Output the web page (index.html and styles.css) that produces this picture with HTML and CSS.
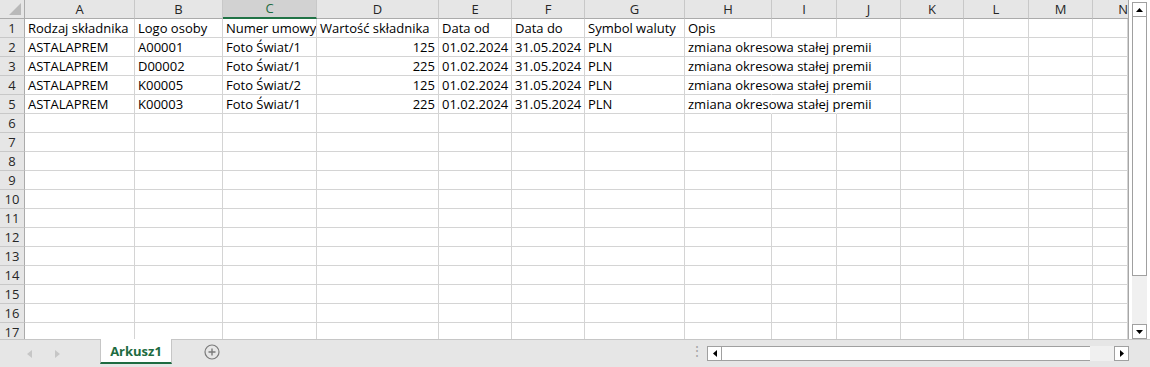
FILE: index.html
```html
<!DOCTYPE html>
<html lang="pl">
<head>
    <meta charset="UTF-8">
    <title>Arkusz1</title>
    <link rel="stylesheet" href="styles.css">
</head>
<body>
<div class="app">
    <div class="main">
        <div class="sheet">
            <div class="row head">
                <span class="corner"><i></i></span>
                <span>A</span><span>B</span><span class="sel">C</span><span>D</span><span>E</span><span>F</span><span>G</span>
                <span>H</span><span>I</span><span>J</span><span>K</span><span>L</span><span>M</span><span class="cut">N</span>
            </div>
            <div class="row">
                <span class="rh">1</span>
                <span>Rodzaj składnika</span><span>Logo osoby</span><span class="clip">Numer umowy</span><span>Wartość składnika</span>
                <span>Data od</span><span>Data do</span><span>Symbol waluty</span><span>Opis</span>
                <span></span><span></span><span></span><span></span><span></span><span></span>
            </div>
            <div class="row">
                <span class="rh">2</span>
                <span>ASTALAPREM</span><span>A00001</span><span>Foto Świat/1</span><span class="num">125</span>
                <span class="num">01.02.2024</span><span class="num">31.05.2024</span><span>PLN</span><span class="ov">zmiana okresowa stałej premii</span>
                <span class="ov"></span><span></span><span></span><span></span><span></span><span></span>
            </div>
            <div class="row">
                <span class="rh">3</span>
                <span>ASTALAPREM</span><span>D00002</span><span>Foto Świat/1</span><span class="num">225</span>
                <span class="num">01.02.2024</span><span class="num">31.05.2024</span><span>PLN</span><span class="ov">zmiana okresowa stałej premii</span>
                <span class="ov"></span><span></span><span></span><span></span><span></span><span></span>
            </div>
            <div class="row">
                <span class="rh">4</span>
                <span>ASTALAPREM</span><span>K00005</span><span>Foto Świat/2</span><span class="num">125</span>
                <span class="num">01.02.2024</span><span class="num">31.05.2024</span><span>PLN</span><span class="ov">zmiana okresowa stałej premii</span>
                <span class="ov"></span><span></span><span></span><span></span><span></span><span></span>
            </div>
            <div class="row">
                <span class="rh">5</span>
                <span>ASTALAPREM</span><span>K00003</span><span>Foto Świat/1</span><span class="num">225</span>
                <span class="num">01.02.2024</span><span class="num">31.05.2024</span><span>PLN</span><span class="ov">zmiana okresowa stałej premii</span>
                <span class="ov"></span><span></span><span></span><span></span><span></span><span></span>
            </div>
            <div class="row"><span class="rh">6</span><span></span><span></span><span></span><span></span><span></span><span></span><span></span><span></span><span></span><span></span><span></span><span></span><span></span><span></span></div>
            <div class="row"><span class="rh">7</span><span></span><span></span><span></span><span></span><span></span><span></span><span></span><span></span><span></span><span></span><span></span><span></span><span></span><span></span></div>
            <div class="row"><span class="rh">8</span><span></span><span></span><span></span><span></span><span></span><span></span><span></span><span></span><span></span><span></span><span></span><span></span><span></span><span></span></div>
            <div class="row"><span class="rh">9</span><span></span><span></span><span></span><span></span><span></span><span></span><span></span><span></span><span></span><span></span><span></span><span></span><span></span><span></span></div>
            <div class="row"><span class="rh">10</span><span></span><span></span><span></span><span></span><span></span><span></span><span></span><span></span><span></span><span></span><span></span><span></span><span></span><span></span></div>
            <div class="row"><span class="rh">11</span><span></span><span></span><span></span><span></span><span></span><span></span><span></span><span></span><span></span><span></span><span></span><span></span><span></span><span></span></div>
            <div class="row"><span class="rh">12</span><span></span><span></span><span></span><span></span><span></span><span></span><span></span><span></span><span></span><span></span><span></span><span></span><span></span><span></span></div>
            <div class="row"><span class="rh">13</span><span></span><span></span><span></span><span></span><span></span><span></span><span></span><span></span><span></span><span></span><span></span><span></span><span></span><span></span></div>
            <div class="row"><span class="rh">14</span><span></span><span></span><span></span><span></span><span></span><span></span><span></span><span></span><span></span><span></span><span></span><span></span><span></span><span></span></div>
            <div class="row"><span class="rh">15</span><span></span><span></span><span></span><span></span><span></span><span></span><span></span><span></span><span></span><span></span><span></span><span></span><span></span><span></span></div>
            <div class="row"><span class="rh">16</span><span></span><span></span><span></span><span></span><span></span><span></span><span></span><span></span><span></span><span></span><span></span><span></span><span></span><span></span></div>
            <div class="row"><span class="rh">17</span><span></span><span></span><span></span><span></span><span></span><span></span><span></span><span></span><span></span><span></span><span></span><span></span><span></span><span></span></div>
        </div>

        <div class="vbar">
            <div class="sbtn"><svg width="7" height="4" viewBox="0 0 7 4"><path d="M0 4 L3.5 0 L7 4 Z" fill="#000"/></svg></div>
            <div class="vthumb"></div>
            <div class="vtrack"></div>
            <div class="sbtn"><svg width="7" height="4" viewBox="0 0 7 4"><path d="M0 0 L3.5 4 L7 0 Z" fill="#000"/></svg></div>
        </div>
    </div>

    <div class="tabbar">
        <div class="nav">
            <svg width="5" height="8" viewBox="0 0 5 8"><path d="M5 0 L0 4 L5 8 Z" fill="#c6c6c6"/></svg>
            <svg width="5" height="8" viewBox="0 0 5 8"><path d="M0 0 L5 4 L0 8 Z" fill="#c6c6c6"/></svg>
        </div>
        <div class="tab">Arkusz1</div>
        <div class="add">
            <svg width="16" height="16" viewBox="0 0 16 16">
                <circle cx="8" cy="8" r="7" fill="none" stroke="#7a7a7a" stroke-width="1.2"/>
                <path d="M8 4.5 V11.5 M4.5 8 H11.5" stroke="#7a7a7a" stroke-width="1.4"/>
            </svg>
        </div>
        <div class="spacer"></div>
        <div class="dots">⋮</div>
        <div class="hbar">
            <div class="sbtn"><svg width="4" height="7" viewBox="0 0 4 7"><path d="M4 0 L0 3.5 L4 7 Z" fill="#000"/></svg></div>
            <div class="hthumb"></div>
            <div class="htrack"></div>
            <div class="sbtn"><svg width="4" height="7" viewBox="0 0 4 7"><path d="M0 0 L4 3.5 L0 7 Z" fill="#000"/></svg></div>
        </div>
    </div>
</div>
</body>
</html>
```

FILE: styles.css
```css
body {
    margin: 0;
    width: 1150px;
    height: 367px;
    overflow: hidden;
    background-color: #ffffff;
    font-family: "Open Sans", "Liberation Sans", Arial, sans-serif;
    font-size: 13px;
    color: #000000;
}

.app {
    display: flex;
    flex-direction: column;
    height: 367px;
}

.main {
    display: flex;
    height: 339px;
}

.sheet {
    width: 1128px;
    height: 339px;
    overflow: hidden;
    border-right: 1px solid #a6a6a6;
    box-sizing: content-box;
}

.row {
    display: grid;
    grid-template-columns: 25px 110px 88px 94px 122px 73px 73px 100px 87px 65px 64px 63px 65px 64px 35px;
    height: 19px;
}

.row span {
    box-sizing: border-box;
    height: 19px;
    border-right: 1px solid #d4d4d4;
    border-bottom: 1px solid #d4d4d4;
    padding: 0 2px 0 3px;
    white-space: nowrap;
    line-height: 18px;
}

.row span.num {
    text-align: right;
    padding-right: 3px;
}

.row span.clip {
    overflow: hidden;
    text-overflow: clip;
}

.row span.ov {
    border-right-color: transparent;
}

.row .rh {
    background-color: #e6e6e6;
    border-right: 1px solid #ababab;
    border-bottom: 1px solid #c8c8c8;
    text-align: center;
    padding: 0;
    color: #262626;
}

.head span {
    background-color: #e6e6e6;
    border-right: 1px solid #c8c8c8;
    border-bottom: 1px solid #ababab;
    text-align: center;
    padding: 0;
    color: #262626;
}

.head span.sel {
    background-color: #d2d2d2;
    color: #1e6b41;
    border-bottom: 2px solid #217346;
    line-height: 17px;
}

.head span.cut {
    text-align: right;
    overflow: hidden;
    border-right: none;
    padding-right: 0;
}

.head .corner {
    position: relative;
    border-right: 1px solid #ababab;
}

.corner i {
    position: absolute;
    right: 3px;
    bottom: 3px;
    width: 0;
    height: 0;
    border-left: 12px solid transparent;
    border-bottom: 12px solid #b9b9b9;
}

/* vertical scrollbar */
.vbar {
    display: flex;
    flex-direction: column;
    width: 15px;
    padding: 2px 0 0 3px;
}

.sbtn {
    box-sizing: border-box;
    width: 15px;
    height: 15px;
    border: 1px solid #a0a0a0;
    background-color: #ffffff;
    display: flex;
    align-items: center;
    justify-content: center;
    flex: none;
}

.vthumb {
    box-sizing: border-box;
    height: 259px;
    border: 1px solid #a0a0a0;
    border-top: none;
    background-color: #ffffff;
}

.vtrack {
    flex: 1;
    background-color: #f0f0f0;
}

/* sheet tabs */
.tabbar {
    display: flex;
    align-items: stretch;
    height: 28px;
    background-color: #e6e6e6;
    border-top: 1px solid #c6c6c6;
    box-sizing: border-box;
}

.nav {
    display: flex;
    align-items: center;
    gap: 23px;
    width: 100px;
    padding-left: 27px;
    box-sizing: border-box;
}

.tab {
    width: 72px;
    margin-top: -1px;
    height: 25px;
    box-sizing: border-box;
    background-color: #ffffff;
    border-left: 1px solid #c6c6c6;
    border-right: 1px solid #c6c6c6;
    border-bottom: 2px solid #1e6b41;
    color: #1e6b41;
    font-weight: bold;
    font-size: 13px;
    text-align: center;
    line-height: 24px;
}

.add {
    display: flex;
    align-items: center;
    padding-left: 32px;
    padding-bottom: 3px;
}

.spacer {
    flex: 1;
}

.dots {
    color: #a6a6a6;
    font-size: 14px;
    line-height: 22px;
    width: 17px;
}

.hbar {
    display: flex;
    width: 422px;
    height: 15px;
    margin: 6px 21px 0 0;
}

.hthumb {
    box-sizing: border-box;
    width: 368px;
    border-top: 1px solid #a0a0a0;
    border-bottom: 1px solid #a0a0a0;
    background-color: #ffffff;
}

.htrack {
    flex: 1;
    background-color: #f0f0f0;
}
```
